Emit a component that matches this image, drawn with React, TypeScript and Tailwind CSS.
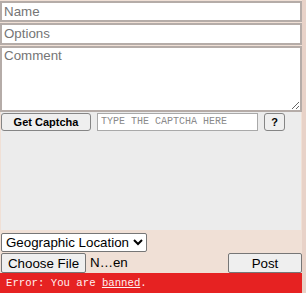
import { useState } from "react";

const fieldClass =
  "block w-full border-2 border-[#b5aca8] bg-white px-[2px] text-[13.33px] text-black outline-none placeholder:text-[#757575]";

export default function App() {
  const [location, setLocation] = useState("");

  return (
    <div className="flex w-[306px] h-[293px] overflow-hidden bg-[#f0e0d6] font-['Liberation_Sans',Arial,sans-serif]">
      <div className="flex w-[302px] flex-col pt-px">
        <input type="text" placeholder="Name" className={`${fieldClass} h-[21px]`} />
        <input type="text" placeholder="Options" className={`${fieldClass} mt-px h-[22px]`} />
        <textarea placeholder="Comment" className={`${fieldClass} mt-px h-[67px] py-0 leading-[15px]`} />

        {/* captcha box */}
        <div className="ml-px flex h-[120px] w-[300px] flex-col bg-[#ececec]">
          <div className="flex items-center gap-[6px] pt-px">
            <button className="h-[18px] w-[90px] rounded-[3px] border border-[#858585] bg-[#efefef] text-[11px] font-semibold text-black">
              Get Captcha
            </button>
            <input
              type="text"
              placeholder="TYPE THE CAPTCHA HERE"
              className="h-[18px] w-[161px] border border-[#a9a9a9] bg-white px-[3px] font-['Liberation_Mono',monospace] text-[10px] placeholder:text-[#8a8a8a] outline-none"
            />
            <button className="h-[18px] w-[21px] rounded-[3px] border border-[#858585] bg-[#efefef] text-[11px] font-semibold text-black">
              ?
            </button>
          </div>
        </div>

        <div className="mt-[3px] flex">
          <select
            value={location}
            onChange={(e) => setLocation(e.target.value)}
            className="ml-px h-[19px] w-[146px] rounded-[2px] border border-[#767676] bg-white text-[13.33px] text-black"
          >
            <option value="">Geographic Location</option>
          </select>
        </div>

        <div className="flex h-[21px] items-center">
          <button className="ml-px h-[20px] w-[85px] rounded-[2px] border border-[#767676] bg-[#efefef] text-[13.33px] text-black">
            Choose File
          </button>
          <span className="ml-[4px] text-[13.33px] text-black">N…en</span>
          <button className="ml-auto h-[20px] w-[74px] rounded-[2px] border border-[#767676] bg-[#efefef] text-[13.33px] text-black">
            Post
          </button>
        </div>

        <div className="flex h-[20px] items-center bg-[#e62222] pl-[6px] font-['Liberation_Mono',monospace] text-[10.67px] text-[#fff0f0]">
          Error: You are&nbsp;<span className="underline">banned</span>.
        </div>
      </div>
      <div className="w-[4px] bg-[#e8d2c8]" />
    </div>
  );
}
